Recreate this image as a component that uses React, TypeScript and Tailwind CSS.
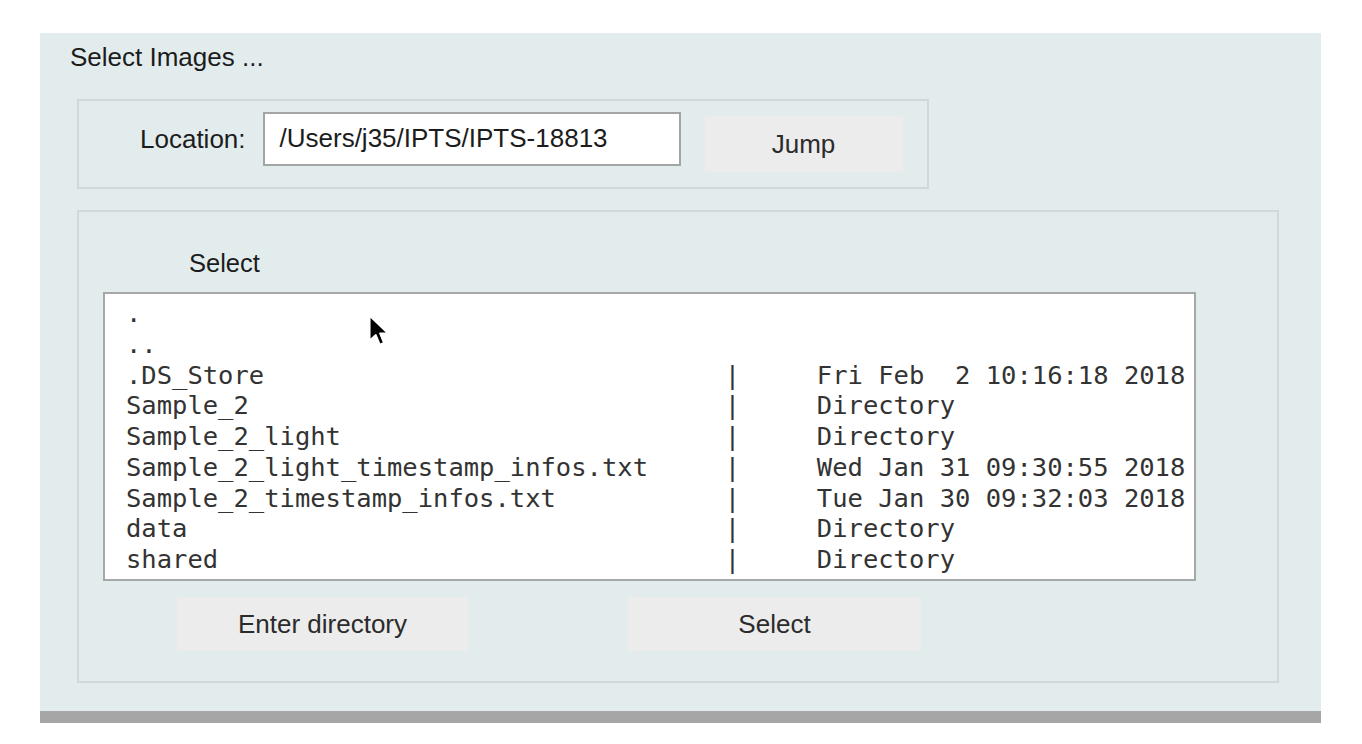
import React from "react";

const SANS = "font-['Liberation_Sans','Helvetica',Arial,sans-serif]";
const MONO = "font-['DejaVu_Sans_Mono',monospace]";

const ENTRIES: [string, string][] = [
  [".", ""],
  ["..", ""],
  [".DS_Store", "Fri Feb  2 10:16:18 2018"],
  ["Sample_2", "Directory"],
  ["Sample_2_light", "Directory"],
  ["Sample_2_light_timestamp_infos.txt", "Wed Jan 31 09:30:55 2018"],
  ["Sample_2_timestamp_infos.txt", "Tue Jan 30 09:32:03 2018"],
  ["data", "Directory"],
  ["shared", "Directory"],
];

function formatRow([name, info]: [string, string]) {
  if (!info) return name;
  return name.padEnd(39, " ") + "|     " + info;
}

function Cursor() {
  return (
    <svg
      className="absolute left-[263px] top-[20px]"
      width="22"
      height="34"
      viewBox="0 0 13 20"
    >
      <path
        d="M1 1 L1 15.5 L4.6 12.3 L7 18 L9.4 17 L7.1 11.4 L11.8 11.4 Z"
        fill="#000"
        stroke="#fff"
        strokeWidth="1"
        strokeLinejoin="round"
      />
    </svg>
  );
}

export default function App() {
  return (
    <div className={`min-h-[744px] bg-white pt-[33px] pl-[40px] ${SANS}`}>
      {/* Panel */}
      <div className="w-[1281px] h-[678px] bg-[#e3ecec] pt-[9px] pl-[37px]">
        <div className="-ml-[7px] text-[26px] leading-[30px] text-[#1c1c1c]">
          Select Images ...
        </div>

        {/* Location */}
        <div className="mt-[27px] w-[852px] h-[90px] border-2 border-[#d2d7d7] flex items-start">
          <div className="ml-[61px] mt-[23px] text-[26px] leading-[30px] text-[#1c1c1c]">
            Location:
          </div>
          <div className="ml-[17px] mt-[11px] w-[418px] h-[54px] bg-white border-2 border-[#a4a6a6] pl-[15px] text-[26px] leading-[48px] text-[#1c1c1c]">
            /Users/j35/IPTS/IPTS-18813
          </div>
          <button className="ml-[24px] mt-[15px] w-[198px] h-[56px] bg-[#ececec] text-[26px] text-[#2b2b2b]">
            Jump
          </button>
        </div>

        {/* Browser */}
        <div className="mt-[21px] w-[1202px] h-[473px] border-2 border-[#d2d7d7]">
          <div className="ml-[110px] mt-[36px] text-[25.5px] leading-[30px] text-[#1c1c1c]">
            Select
          </div>
          <div className="relative ml-[24px] mt-[14px] w-[1093px] h-[289px] bg-white border-2 border-[#a6a8a8] pl-[21px] pt-[4px]">
            <div className={`${MONO} text-[25.5px] leading-[30.75px] text-[#333333] whitespace-pre`}>
              {ENTRIES.map((e, i) => (
                <div key={i}>{formatRow(e)}</div>
              ))}
            </div>
            <Cursor />
          </div>
          <div className="flex mt-[16px]">
            <button className="ml-[98px] w-[291px] h-[54px] bg-[#ececec] text-[26px] text-[#2b2b2b]">
              Enter directory
            </button>
            <button className="ml-[160px] w-[293px] h-[54px] bg-[#ececec] text-[26px] text-[#2b2b2b]">
              Select
            </button>
          </div>
        </div>
      </div>
      <div className="w-[1281px] h-[12px] bg-[#a6a6a6]" />
    </div>
  );
}
